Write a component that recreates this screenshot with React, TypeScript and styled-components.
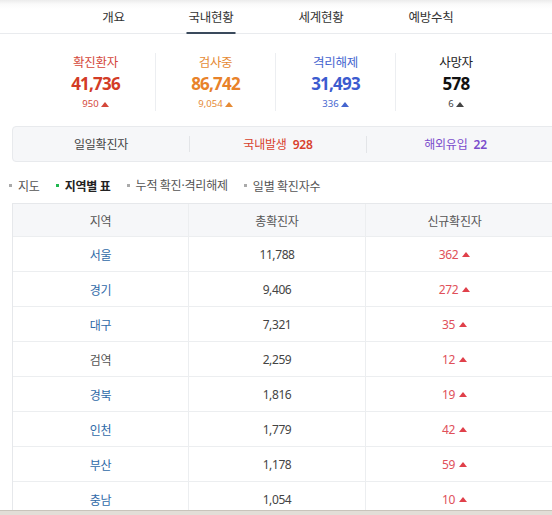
import React from "react";
import styled, { createGlobalStyle } from "styled-components";

const Global = createGlobalStyle`
  html, body { margin: 0; padding: 0; background: #fff; overflow: hidden; }
  body { font-family: "Noto Sans CJK KR", "Noto Sans", sans-serif; color: #333; }
  * { box-sizing: border-box; }
`;

const Page = styled.div`
  width: 552px;
  height: 515px;
  position: relative;
  overflow: hidden;
  background: #fff;
`;

const Tabs = styled.nav`
  height: 34px;
  display: grid;
  grid-template-columns: 85px 110px 110px 110px;
  padding-left: 71px;
  border-bottom: 1px solid #e9ebee;
  background: linear-gradient(#ececec 0px, #fafafa 4px, #ffffff 9px);
`;

const Tab = styled.div<{ $active?: boolean }>`
  display: flex;
  align-items: center;
  justify-content: center;
  font-size: 12.5px;
  letter-spacing: -0.3px;
  color: #333;
  position: relative;
  &::after {
    content: "";
    display: ${(p) => (p.$active ? "block" : "none")};
    position: absolute;
    left: 50%;
    transform: translateX(-50%);
    bottom: -1px;
    width: 49px;
    height: 2px;
    background: #3a4a5c;
  }
`;

const Stats = styled.div`
  display: grid;
  grid-template-columns: repeat(4, 120px);
  padding: 19px 0 0 36px;
  height: 92px;
`;

const Stat = styled.div<{ $last?: boolean }>`
  display: flex;
  flex-direction: column;
  align-items: center;
  border-right: ${(p) => (p.$last ? "none" : "1px solid #eceef1")};
  height: 58px;
`;

const StatLabel = styled.div<{ $c: string }>`
  font-size: 12.5px;
  line-height: 18px;
  color: ${(p) => p.$c};
  letter-spacing: -0.3px;
`;

const StatNum = styled.div<{ $c: string }>`
  font-family: "Noto Sans", sans-serif;
  font-weight: 700;
  font-size: 17px;
  line-height: 26px;
  color: ${(p) => p.$c};
  letter-spacing: -0.8px;
`;

const StatDelta = styled.div<{ $c: string }>`
  font-family: "Noto Sans", sans-serif;
  font-size: 9.5px;
  line-height: 14px;
  color: ${(p) => p.$c};
  display: flex;
  align-items: center;
  gap: 2px;
`;

const Tri = styled.span<{ $c: string }>`
  display: inline-block;
  width: 0;
  height: 0;
  border-left: 4px solid transparent;
  border-right: 4px solid transparent;
  border-bottom: 5px solid ${(p) => p.$c};
`;

const Daily = styled.div`
  margin: 0 0 0 12px;
  width: 560px;
  height: 36px;
  display: grid;
  grid-template-columns: 177px 177px 177px;
  background: #f6f7f9;
  border: 1px solid #e8eaed;
  border-radius: 4px;
  align-items: center;
`;

const DailyCell = styled.div<{ $c: string; $divider?: boolean }>`
  text-align: center;
  font-size: 12px;
  color: ${(p) => p.$c};
  letter-spacing: -0.2px;
  border-right: ${(p) => (p.$divider ? "1px solid #e3e5e8" : "none")};
  line-height: 16px;
  b {
    font-family: "Noto Sans", sans-serif;
    font-weight: 600;
    margin-left: 6px;
  }
`;

const Filters = styled.div`
  display: flex;
  align-items: center;
  height: 41px;
  padding: 5px 0 0 9px;
  gap: 16px;
`;

const Filter = styled.div<{ $active?: boolean }>`
  display: flex;
  align-items: center;
  gap: 6px;
  font-size: 12px;
  letter-spacing: -0.2px;
  color: ${(p) => (p.$active ? "#222" : "#555")};
  font-weight: ${(p) => (p.$active ? 700 : 400)};
  &::before {
    content: "";
    width: 3px;
    height: 3px;
    background: ${(p) => (p.$active ? "#20b850" : "#aaa")};
  }
`;

const Dot = styled.span`
  font-family: "Noto Sans", sans-serif;
`;

const Table = styled.div`
  margin-left: 12px;
  width: 560px;
  border-left: 1px solid #e6e8eb;
  border-top: 1px solid #e6e8eb;
`;

const Row = styled.div<{ $head?: boolean }>`
  display: grid;
  grid-template-columns: 176px 177px 177px;
  height: ${(p) => (p.$head ? "33px" : "35px")};
  background: ${(p) => (p.$head ? "#f6f7f9" : "#fff")};
  border-bottom: 1px solid #eceef0;
`;

const Cell = styled.div<{ $c?: string; $last?: boolean }>`
  display: flex;
  align-items: center;
  justify-content: center;
  gap: 4px;
  font-size: 12px;
  color: ${(p) => p.$c || "#444"};
  border-right: ${(p) => (p.$last ? "none" : "1px solid #eceef0")};
  letter-spacing: -0.2px;
`;

const Num = styled.span`
  font-family: "Noto Sans", sans-serif;
  font-size: 12px;
  letter-spacing: -0.4px;
`;

const ScrollBar = styled.div`
  position: absolute;
  left: 0;
  right: 0;
  bottom: 0;
  height: 5px;
  background: #e2ded7;
  border-top: 1px solid #c9c4bb;
`;

const stats = [
  { label: "확진환자", num: "41,736", delta: "950", lc: "#d4473a", nc: "#d33c26", dc: "#d4473a" },
  { label: "검사중", num: "86,742", delta: "9,054", lc: "#e58a35", nc: "#e8822a", dc: "#e58a35" },
  { label: "격리해제", num: "31,493", delta: "336", lc: "#4565cf", nc: "#3c5bcf", dc: "#4565cf" },
  { label: "사망자", num: "578", delta: "6", lc: "#222", nc: "#111", dc: "#444" },
];

const rows: { name: string; total: string; fresh: string; blue: boolean }[] = [
  { name: "서울", total: "11,788", fresh: "362", blue: true },
  { name: "경기", total: "9,406", fresh: "272", blue: true },
  { name: "대구", total: "7,321", fresh: "35", blue: true },
  { name: "검역", total: "2,259", fresh: "12", blue: false },
  { name: "경북", total: "1,816", fresh: "19", blue: true },
  { name: "인천", total: "1,779", fresh: "42", blue: true },
  { name: "부산", total: "1,178", fresh: "59", blue: true },
  { name: "충남", total: "1,054", fresh: "10", blue: true },
];

export default function App() {
  return (
    <Page>
      <Global />
      <Tabs>
        <Tab>개요</Tab>
        <Tab $active>국내현황</Tab>
        <Tab>세계현황</Tab>
        <Tab>예방수칙</Tab>
      </Tabs>
      <Stats>
        {stats.map((s, i) => (
          <Stat key={s.label} $last={i === stats.length - 1}>
            <StatLabel $c={s.lc}>{s.label}</StatLabel>
            <StatNum $c={s.nc}>{s.num}</StatNum>
            <StatDelta $c={s.dc}>
              {s.delta}
              <Tri $c={s.dc} />
            </StatDelta>
          </Stat>
        ))}
      </Stats>
      <Daily>
        <DailyCell $c="#444" $divider>일일확진자</DailyCell>
        <DailyCell $c="#d8402c" $divider>
          국내발생<b>928</b>
        </DailyCell>
        <DailyCell $c="#7a4ccc">
          해외유입<b>22</b>
        </DailyCell>
      </Daily>
      <Filters>
        <Filter>지도</Filter>
        <Filter $active>지역별 표</Filter>
        <Filter>
          <span>
            누적 확진<Dot>·</Dot>격리해제
          </span>
        </Filter>
        <Filter>일별 확진자수</Filter>
      </Filters>
      <Table>
        <Row $head>
          <Cell $c="#555">지역</Cell>
          <Cell $c="#555">총확진자</Cell>
          <Cell $c="#555" $last>신규확진자</Cell>
        </Row>
        {rows.map((r) => (
          <Row key={r.name}>
            <Cell $c={r.blue ? "#2f6aa8" : "#555"}>{r.name}</Cell>
            <Cell $c="#444">
              <Num>{r.total}</Num>
            </Cell>
            <Cell $c="#e0505a" $last>
              <Num>{r.fresh}</Num>
              <Tri $c="#e0404a" />
            </Cell>
          </Row>
        ))}
      </Table>
      <ScrollBar />
    </Page>
  );
}
